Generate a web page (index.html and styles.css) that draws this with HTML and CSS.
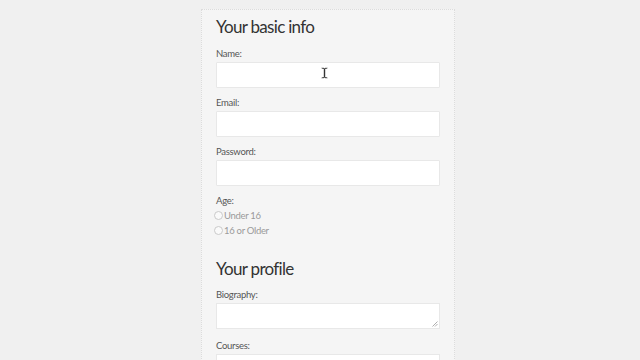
FILE: index.html
```html
<!DOCTYPE html>
<html>
<head>
<meta charset="utf-8">
<link rel="stylesheet" href="styles.css">
</head>
<body>
<form class="card">
  <h2 class="section-title">Your basic info</h2>
  <div class="field">
    <label class="label">Name:</label>
    <div class="input-wrap">
      <input class="input" type="text">
      <svg class="cursor" width="7" height="12" viewBox="0 0 7 12"><path d="M0.5 0.5h2.5v0.5h1v-0.5h2.5v1.5h-2v8h2v1.5h-2.5v-0.5h-1v0.5h-2.5v-1.5h2v-8h-2z" fill="#333" stroke="#fff" stroke-width="0.6"/></svg>
    </div>
  </div>
  <div class="field">
    <label class="label">Email:</label>
    <input class="input" type="text">
  </div>
  <div class="field">
    <label class="label">Password:</label>
    <input class="input" type="password">
  </div>
  <div class="field">
    <label class="label label-tight">Age:</label>
    <div class="radio-row"><span class="radio"></span><span class="radio-text">Under 16</span></div>
    <div class="radio-row"><span class="radio"></span><span class="radio-text">16 or Older</span></div>
  </div>
  <h2 class="section-title second">Your profile</h2>
  <div class="field field-bio">
    <label class="label">Biography:</label>
    <div class="textarea">
      <svg class="grip" width="6" height="6" viewBox="0 0 6 6"><path d="M5.5 0.5L0.5 5.5M5.5 3L3 5.5" stroke="#999" stroke-width="0.8"/></svg>
    </div>
  </div>
  <div class="field">
    <label class="label">Courses:</label>
    <div class="select"><span class="select-text">Computer Science Fundamentals</span><span class="arrows">&#8597;</span></div>
  </div>
</form>
</body>
</html>
```

FILE: styles.css
```css
html, body {
  margin: 0;
  padding: 0;
  background: #f0f0f0;
  font-family: Lato, "Open Sans", sans-serif;
  color: #333;
  overflow: hidden;
  height: 360px;
}

.card {
  box-sizing: border-box;
  width: 254px;
  margin: 9px 0 0 201px;
  padding: 5px 14px 20px;
  background: #f5f5f5;
  border: 1px dotted #dcdcdc;
}

.section-title {
  margin: 0 0 8px;
  font-size: 17px;
  line-height: 24px;
  font-weight: 400;
  letter-spacing: -0.7px;
  color: #333;
}

.section-title.second {
  margin-top: 19px;
  margin-bottom: 7px;
}

.field {
  margin-bottom: 8px;
}

.field-bio {
  margin-bottom: 10px;
}

.label {
  display: block;
  font-size: 9.5px;
  line-height: 14px;
  letter-spacing: -0.3px;
  color: #555;
  margin-bottom: 1px;
}

.label-tight {
  margin-bottom: 0;
}

.input-wrap {
  position: relative;
}

.input {
  display: block;
  box-sizing: border-box;
  width: 224px;
  height: 26px;
  margin: 0;
  background: #fff;
  border: 1px solid #e8e8e8;
  border-radius: 1px;
  outline: none;
}

.cursor {
  position: absolute;
  left: 105px;
  top: 5px;
}

.radio-row {
  display: flex;
  align-items: center;
  height: 15px;
  margin-left: -2px;
}

.radio {
  box-sizing: border-box;
  width: 9px;
  height: 9px;
  border: 1px solid #cacaca;
  border-radius: 50%;
  background: #fafafa;
  margin-right: 1px;
}

.radio-text {
  font-size: 9.5px;
  letter-spacing: -0.3px;
  color: #9a9a9a;
}

.textarea {
  position: relative;
  box-sizing: border-box;
  width: 224px;
  height: 26px;
  background: #fff;
  border: 1px solid #e8e8e8;
}

.grip {
  position: absolute;
  right: 1px;
  bottom: 1px;
}

.select {
  box-sizing: border-box;
  width: 224px;
  height: 26px;
  background: #fff;
  border: 1px solid #e8e8e8;
  display: flex;
  align-items: center;
  justify-content: space-between;
  padding: 0 4px 0 6px;
  font-size: 9.5px;
  letter-spacing: -0.3px;
  color: #999;
}

.arrows {
  font-size: 8px;
  color: #666;
}
```
